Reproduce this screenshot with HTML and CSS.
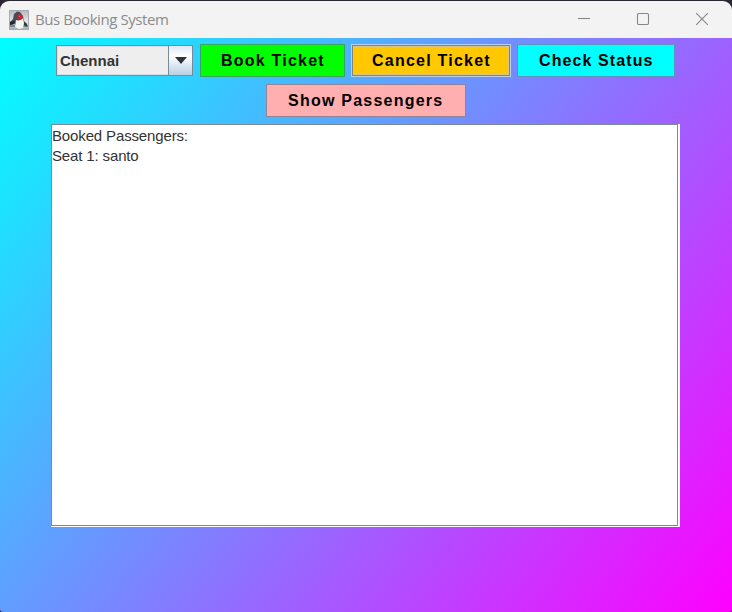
FILE: index.html
```html
<!DOCTYPE html>
<html lang="en">
<head>
<meta charset="utf-8">
<title>Bus Booking System</title>
<link rel="stylesheet" href="styles.css">
</head>
<body>
<div class="window">
  <header class="titlebar">
    <svg class="app-icon" width="20" height="20" viewBox="0 0 20 20">
      <defs><linearGradient id="sky" x1="0" y1="0" x2="0" y2="1"><stop offset="0" stop-color="#b4bac1"/><stop offset=".6" stop-color="#e4e8eb"/><stop offset="1" stop-color="#9eacb8"/></linearGradient></defs>
      <rect x=".5" y=".5" width="19" height="19" fill="url(#sky)" stroke="#a5abb1"/>
      <path d="M1 15h18v2H1z" fill="#7b8792"/>
      <path d="M8 1.5L5 4 4 9l-3 3v3l5-1 1 3 5-3 3 1 3 2v-3l-3-3-1-5-3-4z" fill="#484b50"/>
      <path d="M7 10c3 1 5 0 7-2l1 5-1 5-4 1-4-2z" fill="#f5f5f2"/>
      <path d="M1 12l5-1-1 3-4 1z" fill="#25292e"/>
      <path d="M15 12l3 2v2l-3-1z" fill="#34383d"/>
      <circle cx="11" cy="7" r="2.7" fill="#c9232b"/>
      <circle cx="10.5" cy="6.3" r=".8" fill="#e05b5b"/>
    </svg>
    <h1 class="title">Bus Booking System</h1>
    <div class="controls">
      <svg width="14" height="14" viewBox="0 0 14 14"><path d="M1 6.5h12"/></svg>
      <svg width="14" height="14" viewBox="0 0 14 14"><rect x="1.5" y="1.5" width="11" height="11" rx="1.2"/></svg>
      <svg width="14" height="14" viewBox="0 0 14 14"><path d="M1.2 1.2l11.6 11.6M12.8 1.2L1.2 12.8"/></svg>
    </div>
  </header>
  <main class="content">
    <div class="row">
      <div class="combo">
        <span class="combo-value">Chennai</span>
        <span class="combo-arrow"><svg width="12" height="7" viewBox="0 0 12 7"><path d="M0 0h12L6 7z" fill="#333"/></svg></span>
      </div>
      <button class="btn book">Book Ticket</button>
      <button class="btn cancel">Cancel Ticket</button>
      <button class="btn check">Check Status</button>
    </div>
    <div class="row second">
      <button class="btn show">Show Passengers</button>
    </div>
    <div class="output"><div class="output-text">Booked Passengers:<br>Seat 1: santo</div></div>
  </main>
</div>
</body>
</html>
```
FILE: styles.css
```css
* { box-sizing: border-box; }
body {
  margin: 0;
  background: #2b2834;
  font-family: "Liberation Sans", Arial, sans-serif;
}
.window {
  height: 612px;
  padding-top: 1px;
  display: flex;
  flex-direction: column;
}
.titlebar {
  height: 37px;
  flex: none;
  display: flex;
  align-items: center;
  padding: 0 23px 0 9px;
  background: #f3f3f3;
  border-radius: 9px 9px 0 0;
}
.title {
  margin: -1px 0 0 6px;
  font: 400 15px/20px "Open Sans", "Noto Sans", sans-serif;
  letter-spacing: -0.43px;
  color: #8b8b8b;
}
.controls {
  margin: -1px 0 0 auto;
  display: flex;
  gap: 45px;
}
.controls svg {
  fill: none;
  stroke: #868686;
  stroke-width: 1.1;
}
.content {
  flex: 1;
  padding-top: 6px;
  background: linear-gradient(128.1deg, #00ffff, #ff00ff);
  border-radius: 0 0 3px 3px;
}
.row {
  display: flex;
  align-items: center;
  padding-left: 56px;
  height: 33px;
}
.second {
  margin-top: 7px;
  padding-left: 266px;
}
.combo {
  width: 137px;
  height: 31px;
  display: flex;
  border: 1px solid #7a8a99;
  background: #eee;
  box-shadow: inset 0 0 0 1px #d5dfea;
}
.combo-value {
  flex: 1;
  padding-left: 3px;
  font-size: 15px;
  font-weight: 700;
  line-height: 30px;
  color: #333;
}
.combo-arrow {
  width: 24px;
  display: flex;
  align-items: center;
  justify-content: center;
  border-left: 1px solid #7a8a99;
  background: linear-gradient(#dce8f3, #fff 35%, #b8cfe5);
}
.btn {
  height: 33px;
  padding: 0;
  border: 1px solid #7a8a99;
  border-radius: 0;
  font: 700 16px/31px "Liberation Sans", Arial, sans-serif;
  letter-spacing: 1.23px;
  color: #000;
  text-align: left;
  text-indent: 20px;
  white-space: nowrap;
}
.book {
  width: 145px;
  margin-left: 7px;
  background: #00ff00;
  border-color: #35a65c;
}
.cancel {
  width: 160px;
  margin-left: 6px;
  background: #ffc800;
  border-color: #b8cfe5;
  box-shadow: inset 0 0 0 1px #7f8580, inset 0 0 0 2px #d9c481;
}
.check {
  width: 158px;
  margin-left: 6px;
  background: #00ffff;
  border-color: #5c94bd;
  text-indent: 21px;
  letter-spacing: 1.1px;
}
.show {
  width: 200px;
  background: #ffafaf;
  border-color: #8f8594;
  text-indent: 21px;
}
.output {
  width: 629px;
  height: 403px;
  margin: 7px 0 0 51px;
  background: #fff;
  border-right: 1px solid #fff;
  border-bottom: 1px solid #fff;
}
.output-text {
  width: 627px;
  height: 402px;
  border: 1px solid #7a8a99;
  padding-top: 1px;
  font-size: 15px;
  line-height: 20px;
  letter-spacing: -0.14px;
  color: #333;
}
```
